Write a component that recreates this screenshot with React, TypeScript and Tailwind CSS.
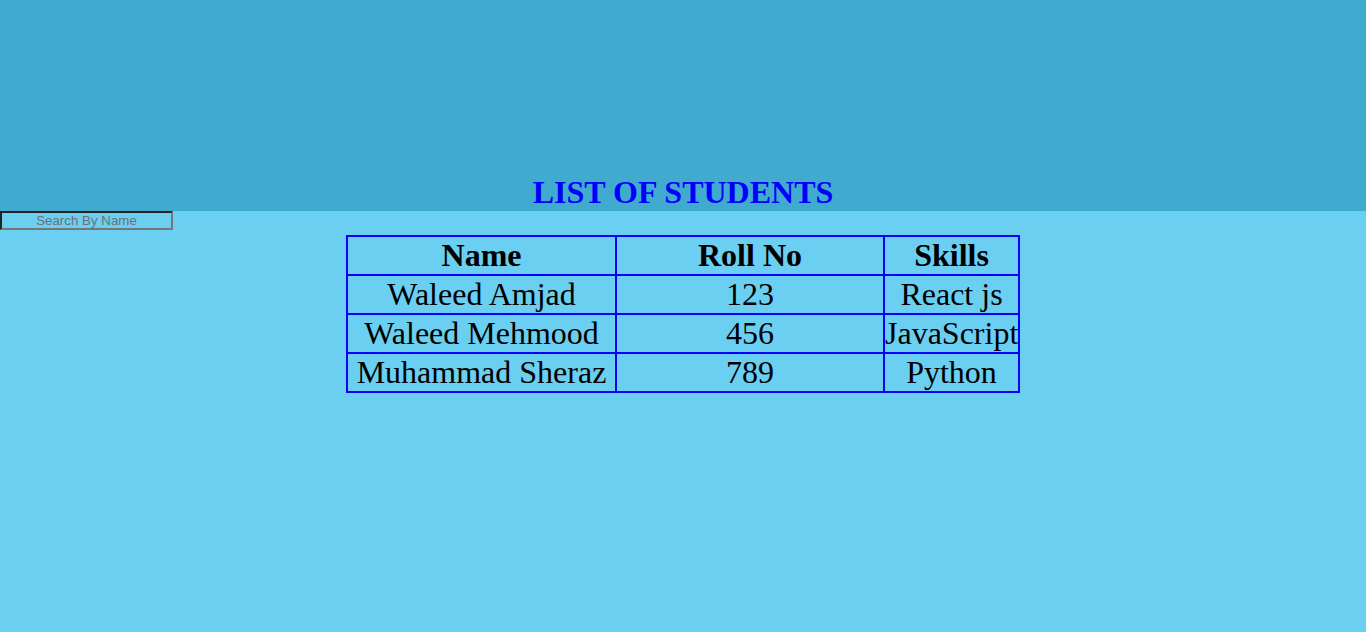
import { useState } from 'react';

const students = [
  { name: 'Waleed Amjad', roll: 123, skills: 'React js' },
  { name: 'Waleed Mehmood', roll: 456, skills: 'JavaScript' },
  { name: 'Muhammad Sheraz', roll: 789, skills: 'Python' },
];

const App = () => {
  const [query, setQuery] = useState<string>('');

  const rows = students.filter(s => s.name.toLowerCase().includes(query.toLowerCase()));

  return (
    <div className="min-h-screen bg-[#6acff0] font-['Liberation_Serif',serif] text-black">
      <header className="h-[211px] bg-[#40abcf] flex items-end justify-center">
        <h1 className="text-[32px] leading-[37px] font-bold text-[#0000ff]">LIST OF STUDENTS</h1>
      </header>
      <input
        className="block w-[173px] h-[19px] border-2 border-t-[#222] border-l-[#222] border-r-[#767676] border-b-[#767676] bg-transparent text-center text-[13.33px] font-['Liberation_Sans',sans-serif] placeholder-[#707070] outline-none"
        type="text"
        placeholder="Search By Name"
        value={query}
        onChange={(e) => setQuery(e.target.value)}
      />
      <table className="mx-auto mt-[5px] w-[672px] table-fixed border-collapse border-2 border-[#0000ff] text-[32px] leading-[37px] text-center">
        <colgroup>
          <col className="w-[269px]" />
          <col className="w-[268px]" />
          <col className="w-[135px]" />
        </colgroup>
        <thead>
          <tr>
            <th className="border-2 border-[#0000ff] p-0 font-bold">Name</th>
            <th className="border-2 border-[#0000ff] p-0 font-bold">Roll No</th>
            <th className="border-2 border-[#0000ff] p-0 font-bold">Skills</th>
          </tr>
        </thead>
        <tbody>
          {rows.map((s) => (
            <tr key={s.roll}>
              <td className="border-2 border-[#0000ff] p-0 whitespace-nowrap">{s.name}</td>
              <td className="border-2 border-[#0000ff] p-0">{s.roll}</td>
              <td className="border-2 border-[#0000ff] p-0 whitespace-nowrap">{s.skills}</td>
            </tr>
          ))}
        </tbody>
      </table>
    </div>
  );
};

export default App
